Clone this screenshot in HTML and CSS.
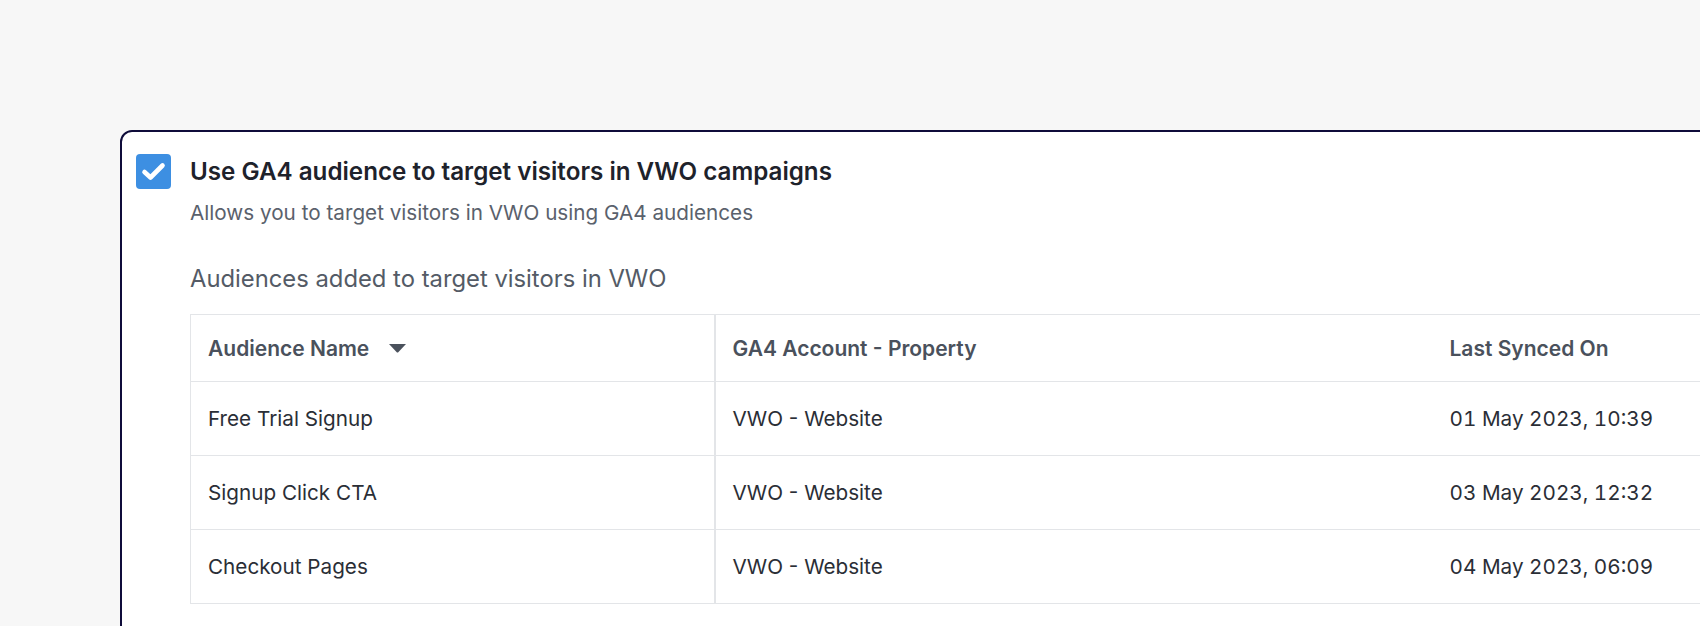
FILE: index.html
```html
<!DOCTYPE html>
<html>
<head>
<meta charset="utf-8">
<link rel="stylesheet" href="styles.css">
</head>
<body>
<div class="page">
  <div class="card">
    <div class="option">
      <span class="checkbox">
        <svg width="25" height="19" viewBox="0 0 25 19"><path d="M3.5 10 L9.5 15.5 L21.5 3.5" fill="none" stroke="#fff" stroke-width="4.6" stroke-linecap="round" stroke-linejoin="round"/></svg>
      </span>
      <span class="title">Use GA4 audience to target visitors in VWO campaigns</span>
    </div>
    <div class="body">
      <p class="subtitle">Allows you to target visitors in VWO using GA4 audiences</p>
      <p class="label">Audiences added to target visitors in VWO</p>
      <table class="grid">
        <colgroup><col class="c1"><col class="c2"><col class="c3"></colgroup>
        <thead>
          <tr>
            <th class="first"><span class="sort">Audience Name <svg class="caret" width="19" height="10" viewBox="0 0 19 10"><path d="M1 1 H18 L10.5 9 Q9.5 10 8.5 9 Z" fill="#4a515c"/></svg></span></th>
            <th>GA4 Account - Property</th>
            <th>Last Synced On</th>
          </tr>
        </thead>
        <tbody>
          <tr><td class="first">Free Trial Signup</td><td>VWO - Website</td><td class="date">01 May 2023, 10:39</td></tr>
          <tr><td class="first">Signup Click CTA</td><td>VWO - Website</td><td class="date">03 May 2023, 12:32</td></tr>
          <tr><td class="first">Checkout Pages</td><td>VWO - Website</td><td class="date">04 May 2023, 06:09</td></tr>
        </tbody>
      </table>
    </div>
  </div>
</div>
</body>
</html>
```
FILE: styles.css
```css
html, body {
  margin: 0;
  padding: 0;
  background: #f7f7f7;
  overflow: hidden;
  height: 626px;
}
.page {
  padding: 130px 0 0 120px;
  font-family: Inter, "Noto Sans", sans-serif;
}
.card {
  width: 1700px;
  height: 700px;
  background: #fff;
  border: 2px solid #0f0c3a;
  border-radius: 12px;
  padding: 22px 0 0 14px;
  box-sizing: border-box;
}
.option {
  display: flex;
  align-items: center;
  gap: 19px;
}
.checkbox {
  width: 35px;
  height: 35px;
  border-radius: 4px;
  background: #3d8fe2;
  display: flex;
  align-items: center;
  justify-content: center;
  flex: none;
}
.title {
  font-size: 24.2px;
  font-weight: 600;
  color: #1e222b;
  line-height: 35px;
}
.body {
  padding-left: 54px;
}
.subtitle {
  margin: 10px 0 0;
  font-size: 20.7px;
  line-height: 27px;
  color: #5a616c;
}
.label {
  margin: 38px 0 0;
  font-size: 23.8px;
  line-height: 30px;
  color: #545b66;
}
.grid {
  margin-top: 20px;
  border-collapse: collapse;
  table-layout: fixed;
  width: 1700px;
  border: 1px solid #e3e5e8;
}
.c1 { width: 524px; }
.c2 { width: 718px; }
.c3 { width: 458px; }
.grid th, .grid td {
  text-align: left;
  padding: 0 0 0 17px;
  border-bottom: 1px solid #e3e5e8;
}
.grid th {
  height: 66px;
  font-size: 21px;
  font-weight: 600;
  color: #4a515c;
}
.grid td {
  height: 73px;
  font-size: 20.7px;
  color: #2a2e36;
}
.grid td.date {
  font-variant-numeric: tabular-nums;
}
.grid .first {
  border-right: 2px solid #e3e5e8;
}
.sort {
  display: inline-flex;
  align-items: center;
}
.caret {
  margin-left: 19px;
}
```
